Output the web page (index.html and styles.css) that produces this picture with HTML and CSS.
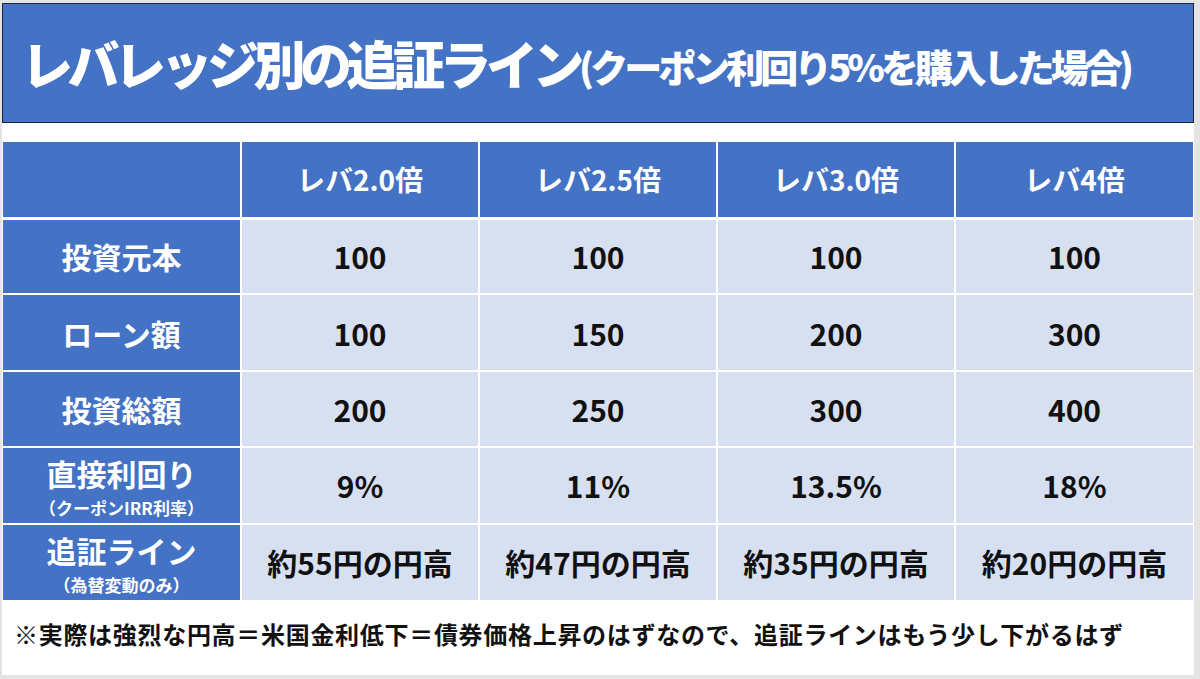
FILE: index.html
```html
<!DOCTYPE html>
<html lang="ja">
<head>
<meta charset="utf-8">
<link rel="stylesheet" href="styles.css">
</head>
<body>
<div class="slide">
  <div class="title">
    <span class="title-main">レバレッジ別の追証ライン</span><span class="title-sub">(クーポン利回り5%を購入した場合)</span>
  </div>
  <table class="grid">
    <colgroup><col><col><col><col><col></colgroup>
    <thead>
      <tr class="head">
        <th></th><th>レバ2.0倍</th><th>レバ2.5倍</th><th>レバ3.0倍</th><th>レバ4倍</th>
      </tr>
    </thead>
    <tbody>
      <tr>
        <th>投資元本</th><td>100</td><td>100</td><td>100</td><td>100</td>
      </tr>
      <tr>
        <th>ローン額</th><td>100</td><td>150</td><td>200</td><td>300</td>
      </tr>
      <tr>
        <th>投資総額</th><td>200</td><td>250</td><td>300</td><td>400</td>
      </tr>
      <tr>
        <th><div class="lbl">直接利回り</div><div class="sub">（クーポンIRR利率）</div></th><td>9%</td><td>11%</td><td>13.5%</td><td>18%</td>
      </tr>
      <tr>
        <th><div class="lbl">追証ライン</div><div class="sub">（為替変動のみ）</div></th><td>約55円の円高</td><td>約47円の円高</td><td>約35円の円高</td><td>約20円の円高</td>
      </tr>
    </tbody>
  </table>
  <p class="note">※実際は強烈な円高＝米国金利低下＝債券価格上昇のはずなので、追証ラインはもう少し下がるはず</p>
</div>
</body>
</html>
```

FILE: styles.css
```css
html, body {
  margin: 0;
  padding: 0;
}
body {
  background: #e4e4e4;
  width: 1200px;
  height: 679px;
  overflow: hidden;
  font-family: "Noto Sans CJK JP", "Noto Sans", sans-serif;
}
.slide {
  width: 1192px;
  height: 672px;
  margin: 3px 0 0 2px;
  background: #ffffff;
  display: flex;
  flex-direction: column;
}
.title {
  box-sizing: border-box;
  height: 120px;
  border: 1px solid #1c2438;
  background: #4472c4;
  color: #ffffff;
  display: flex;
  align-items: center;
  padding-left: 18px;
  white-space: nowrap;
}
.title-main {
  font-size: 52px;
  font-weight: 900;
  letter-spacing: -5.5px;
  line-height: 1;
}
.title-sub {
  font-size: 38px;
  font-weight: 900;
  letter-spacing: -4px;
  line-height: 1;
  padding-top: 6px;
}
.grid {
  margin: 19px 0 0 1px;
  width: 1190px;
  height: 458px;
  border-collapse: collapse;
  table-layout: fixed;
}
.grid th, .grid td {
  border: 2px solid #ffffff;
  text-align: center;
  vertical-align: middle;
  padding: 0;
  font-weight: 700;
}
.grid tr { height: 76px; }
.grid tr.head { height: 76px; }
.grid tr.head th {
  border-bottom-width: 3px;
  font-size: 28px;
}
.grid th {
  background: #4472c4;
  color: #ffffff;
  font-size: 30px;
}
.grid td {
  background: #d7e0f1;
  color: #111111;
  font-size: 30px;
}
.grid tr:first-child th, .grid tr:first-child td { border-top: 0; }
.grid th:first-child { border-left: 0; }
.grid td:last-child, .grid th:last-child { border-right: 0; }
.grid tbody tr:last-child th, .grid tbody tr:last-child td { border-bottom: 0; }
.lbl {
  font-size: 30px;
  line-height: 44px;
}
.sub {
  font-size: 17px;
  line-height: 25px;
}
.note {
  margin: 16px 0 0 12px;
  font-size: 24px;
  font-weight: 700;
  letter-spacing: 0.7px;
  color: #111111;
  white-space: nowrap;
}
```
